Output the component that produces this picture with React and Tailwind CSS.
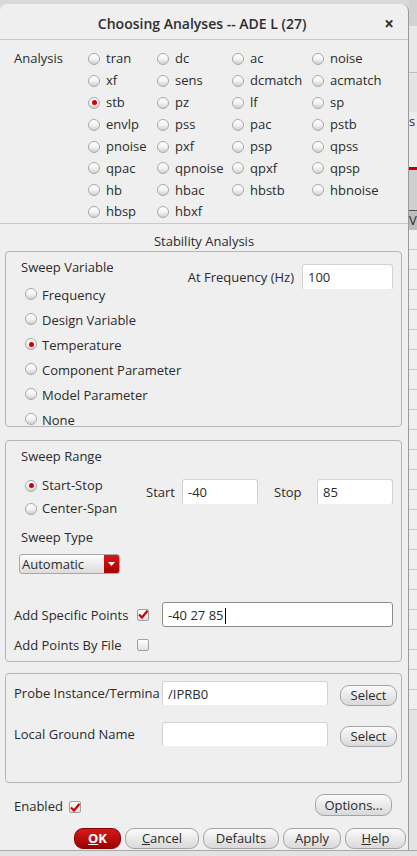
import React from 'react';

const Radio = ({ checked }) => (
  <span className="inline-flex h-[12px] w-[12px] shrink-0 items-center justify-center rounded-full border border-[#a9a9a9] bg-linear-to-b from-[#ffffff] via-[#f4f4f4] to-[#cfcfcf]">
    {checked && <span className="h-[5px] w-[5px] rounded-full bg-[#d60000]" />}
  </span>
);

const Check = ({ checked }) => (
  <span className="inline-flex h-[12px] w-[12px] shrink-0 items-center justify-center rounded-[2px] border border-[#a0a0a0] bg-linear-to-b from-[#ffffff] to-[#e2e2e2]">
    {checked && (
      <svg width="10" height="9" viewBox="0 0 10 9">
        <path d="M1 4.5 L4 7.5 L9.5 0.8" fill="none" stroke="#d40000" strokeWidth="2.2" />
      </svg>
    )}
  </span>
);

const Field = ({ value, className = '', focused }) => (
  <div
    className={`flex items-center rounded-[3px] bg-white px-[5px] pt-[2px] text-[13px] ${
      focused ? 'border border-[#8c8c8c]' : 'border border-[#d2d2d2] border-b-[#f0f0f0]'
    } ${className}`}
  >
    {value}
    {focused && <span className="ml-[1px] h-[16px] w-[1px] bg-black" />}
  </div>
);

const Btn = ({ children, className = '' }) => (
  <button className={`flex items-center justify-center rounded-[9px] border border-[#a4a4a4] bg-linear-to-b from-[#fbfbfb] to-[#d9d9d9] pt-[1px] text-[13px] text-[#2b2b2b] ${className}`}>
    {children}
  </button>
);

const analyses = [
  ['tran', 'dc', 'ac', 'noise'],
  ['xf', 'sens', 'dcmatch', 'acmatch'],
  ['stb', 'pz', 'lf', 'sp'],
  ['envlp', 'pss', 'pac', 'pstb'],
  ['pnoise', 'pxf', 'psp', 'qpss'],
  ['qpac', 'qpnoise', 'qpxf', 'qpsp'],
  ['hb', 'hbac', 'hbstb', 'hbnoise'],
  ['hbsp', 'hbxf', '', ''],
];

const sweepVars = ['Frequency', 'Design Variable', 'Temperature', 'Component Parameter', 'Model Parameter', 'None'];

export default function App() {
  return (
    <div className="flex h-[856px] w-[417px] flex-col overflow-hidden bg-[#d9d9d9] text-[#2b2b2b]" style={{ fontFamily: '"Open Sans", "Noto Sans", sans-serif' }}>
      <div className="flex flex-1">
        {/* Dialog */}
        <div className="mt-[4px] flex w-[409px] flex-col rounded-t-[7px] border-r border-[#9a9a9a] bg-[#efefef]">
          {/* Title bar */}
          <div className="flex h-[36px] items-center border-b border-[#c9c9c9] pl-[20px] pr-[14px] pt-[4px]">
            <div className="flex-1 text-center text-[14px] font-semibold text-[#2e2e2e]">Choosing Analyses -- ADE L (27)</div>
            <span className="text-[17px] font-bold leading-none text-[#333]">×</span>
          </div>

          {/* Analysis grid */}
          <div className="h-[184px] border-b border-[#c9c9c9] pl-[14px] pt-[8px]">
            <div className="grid grid-cols-[74px_69px_75px_80px_1fr]">
              {analyses.map((row, r) => (
                <React.Fragment key={r}>
                  <div className="flex h-[21.9px] items-center text-[13px]">{r === 0 ? 'Analysis' : ''}</div>
                  {row.map((a, c) => (
                    <div key={c} className="flex h-[21.9px] items-center gap-[6px] text-[13px]">
                      {a && (
                        <>
                          <Radio checked={a === 'stb'} />
                          <span>{a}</span>
                        </>
                      )}
                    </div>
                  ))}
                </React.Fragment>
              ))}
            </div>
          </div>

          <div className="h-[27px] pt-[8px] text-center text-[13px] leading-[18px]">Stability Analysis</div>

          {/* Group 1 */}
          <div className="ml-[5px] flex h-[176px] w-[397px] rounded-[4px] border border-[#b5b5b5]">
            <div className="flex flex-col pt-[6px]">
              <div className="pl-[15px] text-[13px] leading-[18px]">Sweep Variable</div>
              <div className="mt-[11px] flex flex-col gap-[11px] pl-[19px]">
                {sweepVars.map((v) => (
                  <div key={v} className="flex h-[14px] items-center gap-[5px] text-[13px] leading-[14px]">
                    <Radio checked={v === 'Temperature'} />
                    <span className="pt-[1px]">{v}</span>
                  </div>
                ))}
              </div>
            </div>
            <div className="ml-auto mr-[8px] mt-[12px] flex h-[26px] items-center">
              <span className="mr-[8px] pt-[2px] text-[13px]">At Frequency (Hz)</span>
              <Field value="100" className="h-[26px] w-[91px]" />
            </div>
          </div>

          {/* Group 2 */}
          <div className="ml-[5px] mt-[13px] flex h-[222px] w-[397px] flex-col rounded-[4px] border border-[#b5b5b5]">
            <div className="pl-[15px] pt-[6px] text-[13px] leading-[18px]">Sweep Range</div>
            <div className="mt-[9px] flex">
              <div className="flex w-[140px] flex-col pl-[19px]">
                <div className="flex h-[23px] items-center gap-[5px] text-[13px]">
                  <Radio checked />
                  <span className="pt-[1px]">Start-Stop</span>
                </div>
                <div className="flex h-[23px] items-center gap-[5px] text-[13px]">
                  <Radio />
                  <span className="pt-[1px]">Center-Span</span>
                </div>
              </div>
              <div className="mt-[5px] flex h-[26px] items-center">
                <span className="w-[36px] pt-[2px] text-[13px]">Start</span>
                <Field value="-40" className="h-[26px] w-[76px]" />
                <span className="ml-[16px] w-[43px] pt-[2px] text-[13px]">Stop</span>
                <Field value="85" className="h-[26px] w-[76px]" />
              </div>
            </div>
            <div className="mt-[8px] pl-[15px] text-[13px] leading-[18px]">Sweep Type</div>
            <div className="ml-[13px] mt-[8px] flex h-[20px] w-[101px] overflow-hidden rounded-[3px] border border-[#a8a8a8] bg-linear-to-b from-[#fdfdfd] to-[#dcdcdc]">
              <span className="flex-1 pl-[2px] text-[13px] leading-[19px]">Automatic</span>
              <span className="flex w-[15px] items-center justify-center bg-linear-to-b from-[#d81818] to-[#a80000]">
                <svg width="7" height="4" viewBox="0 0 7 4">
                  <path d="M0 0 L7 0 L3.5 4 Z" fill="#fff" />
                </svg>
              </span>
            </div>
            <div className="mt-[28px] flex h-[25px] items-center pl-[8px]">
              <span className="w-[123px] pt-[2px] text-[13px]">Add Specific Points</span>
              <Check checked />
              <Field value="-40 27 85" focused className="ml-[13px] h-[25px] w-[231px]" />
            </div>
            <div className="mt-[9px] flex h-[18px] items-center pl-[8px]">
              <span className="w-[123px] pt-[2px] text-[13px]">Add Points By File</span>
              <Check />
            </div>
          </div>

          {/* Group 3 */}
          <div className="ml-[5px] mt-[11px] flex h-[110px] w-[397px] flex-col rounded-[4px] border border-[#b5b5b5] pt-[7px]">
            <div className="flex h-[25px] items-center pl-[8px]">
              <span className="w-[148px] pt-[1px] text-[13px]">Probe Instance/Termina</span>
              <Field value="/IPRB0" className="h-[25px] w-[166px]" />
              <Btn className="ml-[12px] mt-[3px] h-[21px] w-[57px]">Select</Btn>
            </div>
            <div className="mt-[16px] flex h-[25px] items-center pl-[8px]">
              <span className="w-[148px] pt-[1px] text-[13px]">Local Ground Name</span>
              <Field value="" className="h-[25px] w-[166px]" />
              <Btn className="ml-[12px] mt-[3px] h-[21px] w-[57px]">Select</Btn>
            </div>
          </div>

          {/* Enabled / Options */}
          <div className="mt-[11px] flex h-[22px] items-center pl-[14px] pr-[16px]">
            <span className="pt-[4px] text-[13px]">Enabled</span>
            <span className="ml-[6px] mt-[1px]">
              <Check checked />
            </span>
            <Btn className="ml-auto h-[22px] w-[77px]">Options...</Btn>
          </div>

          {/* Bottom buttons */}
          <div className="mt-[12px] flex h-[21px] justify-end gap-[4px] pr-[2px]">
            <button className="flex h-[21px] w-[47px] items-center justify-center rounded-[9px] border border-[#8a0000] bg-linear-to-b from-[#d41a1a] to-[#a00000] pt-[1px] text-[13px] font-bold text-white">
              <span className="underline">O</span>K
            </button>
            <Btn className="h-[21px] w-[74px]">
              <span className="underline">C</span>ancel
            </Btn>
            <Btn className="h-[21px] w-[76px]">Defaults</Btn>
            <Btn className="h-[21px] w-[58px]">Apply</Btn>
            <Btn className="h-[21px] w-[61px]">
              <span className="underline">H</span>elp
            </Btn>
          </div>
        </div>

        {/* Background window peeking on the right */}
        <div className="flex flex-1 flex-col bg-[#e4e4e4]">
          <div className="h-[26px] bg-[#d2d2d2]" />
          <div className="h-[46px] bg-[#e8e8e8]" />
          <div className="h-[40px] border-t border-[#bcbcbc]" />
          <div className="h-[55px] bg-[#ececec] text-[13px]">s</div>
          <div className="h-[3px] bg-[#c00000]" />
          <div className="h-[40px] bg-[#cfcfcf]" />
          <div className="h-[20px] border-t border-[#555] bg-[#bdbdbd] text-[13px]">V</div>
          {Array.from({ length: 24 }).map((_, i) => (
            <div key={i} className="h-[20px] border-b border-[#c8c8c8] bg-[#efefef]" />
          ))}
        </div>
      </div>
      <div className="h-[6px] border-t border-[#a8a8a8] bg-[#e2e2e2]" />
    </div>
  );
}
